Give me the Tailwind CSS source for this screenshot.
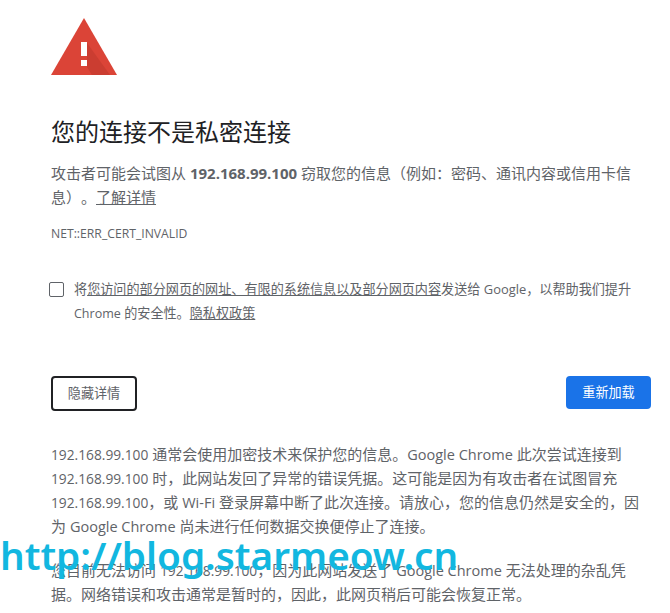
<!DOCTYPE html>
<html lang="zh-CN">
<head>
  <meta charset="UTF-8">
  <title>隐私设置错误</title>
  <script src="https://cdn.jsdelivr.net/npm/@tailwindcss/browser@4"></script>
</head>
<body class="relative h-[613px] overflow-hidden bg-white font-['Open_Sans','Noto_Sans_CJK_SC',sans-serif] text-[#5f6368] [text-spacing-trim:space-all]">
  <div class="w-[600px] ml-[51px] pt-[18px]">
    <!-- warning icon -->
    <svg class="block" width="66" height="57" viewBox="0 0 66 57">
      <polygon points="33,0 66,57 0,57" fill="#db4437"/>
      <polygon points="36,25 59,57 41,57 36,49" fill="#a52f25" opacity="0.3"/>
      <rect x="30" y="24" width="6" height="14" fill="#fff"/>
      <rect x="30" y="42" width="6" height="6" fill="#fff"/>
    </svg>

    <h1 class="mt-[39px] text-[24px] leading-[36px] font-normal text-[#202124] whitespace-nowrap">您的连接不是私密连接</h1>
    <p class="mt-[11px] text-[15px] leading-[24px] whitespace-nowrap">
      攻击者可能会试图从 <strong class="font-bold">192.168.99.100</strong> 窃取您的信息（例如：密码、通讯内容或信用卡信<br>息）。<a class="underline" href="#">了解详情</a>
    </p>
    <div class="mt-[16px] text-[12.2px] leading-[18px]">NET::ERR_CERT_INVALID</div>

    <div class="mt-[34px] flex">
      <span class="-ml-[2px] mt-[5px] w-[15px] h-[15px] shrink-0 rounded-[2px] border border-[#5f6368]"></span>
      <p class="ml-[10px] text-[13.125px] leading-[24px] whitespace-nowrap">
        将<a class="underline" href="#">您访问的部分网页的网址、有限的系统信息以及部分网页内容</a>发送给 <span class="text-[12.9px] leading-none">Google</span>，以帮助我们提升<br><span class="text-[12.5px] leading-none">Chrome</span> 的安全性。<a class="underline" href="#">隐私权政策</a>
      </p>
    </div>

    <div class="mt-[51px] flex justify-between items-start">
      <button class="w-[86px] h-[35px] pt-[1px] rounded-[4px] border-2 border-[#202124] bg-white text-[13.125px] text-[#5f6368]">隐藏详情</button>
      <button class="w-[85px] h-[33px] pt-[1px] rounded-[4px] bg-[#1a73e8] text-[13.125px] text-white">重新加载</button>
    </div>

    <p class="mt-[31px] text-[15px] leading-[24px] whitespace-nowrap">
      <span class="text-[13.75px] leading-none">192.168.99.100</span> 通常会使用加密技术来保护您的信息。<span class="text-[14.5px] leading-none">Google Chrome</span> 此次尝试连接到<br><span class="text-[13.75px] leading-none">192.168.99.100</span> 时，此网站发回了异常的错误凭据。这可能是因为有攻击者在试图冒充<br><span class="text-[13.75px] leading-none">192.168.99.100</span>，或 <span class="text-[14.5px] leading-none">Wi-Fi</span> 登录屏幕中断了此次连接。请放心，您的信息仍然是安全的，因<br>为 <span class="text-[14.5px] leading-none">Google Chrome</span> 尚未进行任何数据交换便停止了连接。
    </p>
    <p class="mt-[20px] text-[15px] leading-[24px] whitespace-nowrap">
      您目前无法访问 <span class="text-[13.75px] leading-none">192.168.99.100</span>，因为此网站发送了 <span class="text-[14.5px] leading-none">Google Chrome</span> 无法处理的杂乱凭<br>据。网络错误和攻击通常是暂时的，因此，此网页稍后可能会恢复正常。
    </p>
  </div>

  <!-- watermark -->
  <div class="absolute left-0 top-[530px] font-['Noto_Sans',sans-serif] font-semibold text-[38.7px] leading-[50px] text-[#12b7e0] whitespace-nowrap">http://blog.starmeow.cn</div>
</body>
</html>
